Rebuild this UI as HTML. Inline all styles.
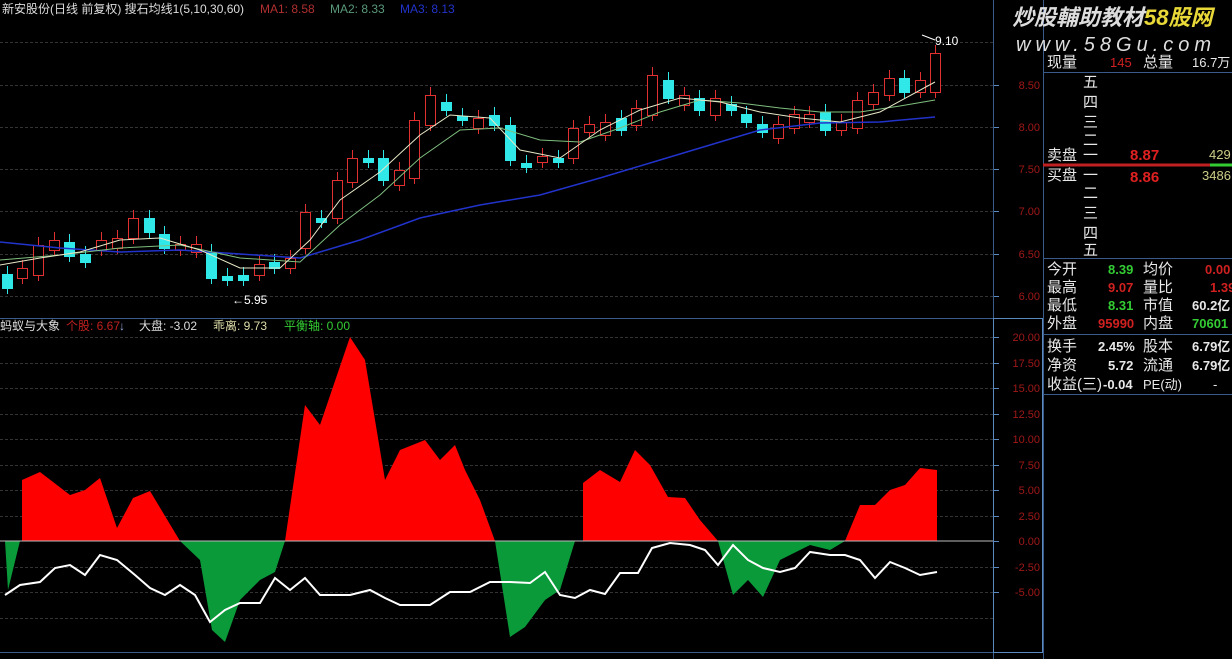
<!DOCTYPE html>
<html><head><meta charset="utf-8"><style>
html,body{margin:0;padding:0;background:#000;width:1232px;height:659px;overflow:hidden}
svg{position:absolute;left:0;top:0}
text{font-family:"Liberation Sans","Noto Sans CJK SC",sans-serif}
</style></head><body>
<svg id="s" width="1232" height="659" xmlns="http://www.w3.org/2000/svg">
<rect width="1232" height="659" fill="#000"/>
<g id="grid"></g>
<!-- lower panel areas -->
<polygon fill="#ff0000" points="22,541 22,480 40,472 70,495 85,490 100,478 117,528 133,498 150,491 180,541"/>
<polygon fill="#0a9a3a" points="5,541 8,590 20,541"/>
<polygon fill="#0a9a3a" points="180,541 200,560 212,630 225,642 240,600 260,580 275,572 285,541"/>
<polygon fill="#ff0000" points="285,541 305,405 320,425 350,337 365,360 385,480 400,450 425,440 440,460 455,445 465,470 480,500 495,541"/>
<polygon fill="#0a9a3a" points="495,541 510,637 525,627 545,600 560,590 575,541"/>
<polygon fill="#ff0000" points="583,541 583,483 600,470 620,482 635,450 650,465 668,497 685,498 700,520 718,541"/>
<polygon fill="#0a9a3a" points="718,541 733,595 748,580 763,597 780,560 810,545 830,550 845,541"/>
<polygon fill="#ff0000" points="845,541 860,505 875,505 890,490 905,485 920,468 937,470 937,541"/>
<line x1="0" y1="541" x2="993" y2="541" stroke="#bbb" stroke-width="1"/>
<polyline fill="none" stroke="#fff" stroke-width="2" points="5,595 20,585 40,582 55,568 70,565 85,575 100,555 117,560 135,575 150,588 165,595 180,585 195,595 210,622 225,610 240,603 260,603 275,578 290,590 305,578 320,595 350,595 370,590 385,598 400,605 430,605 450,592 470,592 490,582 510,582 530,583 545,572 560,595 575,598 590,590 605,594 620,573 638,573 652,548 670,543 690,545 705,550 718,565 733,545 748,560 763,568 780,572 795,568 810,552 830,555 845,555 860,560 875,578 890,562 905,568 920,575 937,572"/>
<g id="candles"></g>
<!-- MAs -->
<polyline fill="none" stroke="#2233cc" stroke-width="1.5" points="0,242 60,248 120,252 180,250 240,254 300,258 360,240 420,218 480,205 540,195 600,178 660,160 700,148 760,130 820,123 880,122 935,117"/>
<polyline fill="none" stroke="#7fbf7f" stroke-width="1" points="0,260 60,255 120,248 180,245 240,258 300,262 340,225 380,195 420,158 460,130 500,128 540,140 580,142 620,128 660,112 700,100 740,103 780,108 820,112 860,112 900,106 935,100"/>
<polyline fill="none" stroke="#e8e8c8" stroke-width="1" points="0,265 40,258 80,252 120,240 160,238 200,250 240,268 280,268 310,240 340,200 380,172 420,135 450,115 490,118 520,150 560,158 600,130 640,110 680,98 720,102 760,112 800,118 840,122 880,112 935,82"/>
<!-- axes -->
<line x1="993.5" y1="0" x2="993.5" y2="659" stroke="#3a5a8a"/>
<line x1="0" y1="318.5" x2="993" y2="318.5" stroke="#3a5a8a"/>
<rect x="993.5" y="318.5" width="49" height="334" fill="none" stroke="#5a8ac0"/>
<line x1="1043.5" y1="0" x2="1043.5" y2="659" stroke="#3a5a8a"/>
<line x1="0" y1="652.5" x2="993" y2="652.5" stroke="#3a5a8a"/>
<g id="axis" font-size="11" fill="#a01818"></g>
<!-- labels -->
<text x="935" y="45" font-size="12" fill="#fff">9.10</text>
<line x1="922" y1="35" x2="935" y2="40" stroke="#fff"/>
<text x="232" y="304" font-size="12" fill="#fff">←5.95</text>
<text x="2" y="13" font-size="12" fill="#ddd">新安股份(日线 前复权) 搜石均线1(5,10,30,60)</text>
<text x="260" y="13" font-size="12" fill="#b03030">MA1: 8.58</text>
<text x="330" y="13" font-size="12" fill="#5a9a7a">MA2: 8.33</text>
<text x="400" y="13" font-size="12" fill="#2233cc">MA3: 8.13</text>
<text x="0" y="330" font-size="12" fill="#ddd">蚂蚁与大象</text>
<text x="66" y="330" font-size="12" fill="#c02020">个股: 6.67</text>
<text x="119" y="330" font-size="12" fill="#9ad">↓</text>
<text x="139" y="330" font-size="12" fill="#ddd">大盘: -3.02</text>
<text x="213" y="330" font-size="12" fill="#dda">乖离: 9.73</text>
<text x="284" y="330" font-size="12" fill="#3c3">平衡轴: 0.00</text>
<!-- right panel -->
<text x="1012" y="25" font-size="22" font-style="italic" font-weight="bold" fill="#ddd">炒股輔助教材<tspan fill="#e8d838">58股网</tspan></text>
<text x="1016" y="51" font-size="20" font-style="italic" fill="#ddd" letter-spacing="5">www.58Gu.com</text>
<g font-size="15" fill="#e8e8e8">
<text x="1047" y="67">现量</text><text x="1110" y="67" fill="#d02020" font-size="13">145</text><text x="1143" y="67">总量</text><text x="1192" y="67" font-size="13">16.7万</text>
<line x1="1043" y1="72.5" x2="1232" y2="72.5" stroke="#3a5a8a"/>
<text x="1083" y="87">五</text><text x="1083" y="107">四</text><text x="1083" y="127">三</text><text x="1083" y="145">二</text><text x="1083" y="160">一</text>
<text x="1047" y="160">卖盘</text><text x="1130" y="160" fill="#e02020" font-weight="bold">8.87</text><text x="1209" y="159" fill="#cc8" font-size="13">429</text>
<text x="1047" y="180">买盘</text><text x="1083" y="180">一</text><text x="1130" y="182" fill="#e02020" font-weight="bold">8.86</text><text x="1202" y="180" fill="#cc8" font-size="13">3486</text>
<text x="1083" y="198">二</text><text x="1083" y="218">三</text><text x="1083" y="238">四</text><text x="1083" y="255">五</text>
<line x1="1043" y1="258.5" x2="1232" y2="258.5" stroke="#3a5a8a"/>
<text x="1047" y="274">今开</text><text x="1108" y="274" fill="#3c3" font-weight="bold" font-size="13">8.39</text><text x="1143" y="274">均价</text><text x="1205" y="274" fill="#d02020" font-weight="bold" font-size="13">0.00</text>
<text x="1047" y="292">最高</text><text x="1108" y="292" fill="#d02020" font-weight="bold" font-size="13">9.07</text><text x="1143" y="292">量比</text><text x="1210" y="292" fill="#d02020" font-weight="bold" font-size="13">1.39</text>
<text x="1047" y="310">最低</text><text x="1108" y="310" fill="#3c3" font-weight="bold" font-size="13">8.31</text><text x="1143" y="310">市值</text><text x="1192" y="310" font-size="13" font-weight="bold">60.2亿</text>
<text x="1047" y="328">外盘</text><text x="1098" y="328" fill="#d02020" font-weight="bold" font-size="13">95990</text><text x="1143" y="328">内盘</text><text x="1192" y="328" fill="#3c3" font-weight="bold" font-size="13">70601</text>
<line x1="1043" y1="334.5" x2="1232" y2="334.5" stroke="#3a5a8a"/>
<text x="1047" y="351">换手</text><text x="1098" y="351" font-weight="bold" font-size="13">2.45%</text><text x="1143" y="351">股本</text><text x="1192" y="351" font-weight="bold" font-size="13">6.79亿</text>
<text x="1047" y="370">净资</text><text x="1108" y="370" font-weight="bold" font-size="13">5.72</text><text x="1143" y="370">流通</text><text x="1192" y="370" font-weight="bold" font-size="13">6.79亿</text>
<text x="1047" y="389">收益(三)</text><text x="1103" y="389" font-weight="bold" font-size="13">-0.04</text><text x="1143" y="389" font-size="13">PE(动)</text><text x="1213" y="389" font-size="13">-</text>
<line x1="1043" y1="394.5" x2="1232" y2="394.5" stroke="#3a5a8a"/>
</g>
<line x1="1043" y1="165" x2="1210" y2="165" stroke="#c02020" stroke-width="3"/>
<line x1="1210" y1="165" x2="1232" y2="165" stroke="#3c3" stroke-width="3"/>
</svg>
<script>
var NS="http://www.w3.org/2000/svg";
function el(p,t,a){var e=document.createElementNS(NS,t);for(var k in a)e.setAttribute(k,a[k]);p.appendChild(e);return e;}
var g=document.getElementById('grid');
[42,85,127,169,211,254,296,337,363,388,414,439,465,490,516,567,592,618].forEach(function(y){el(g,'line',{x1:0,y1:y+.5,x2:993,y2:y+.5,stroke:'#333','stroke-dasharray':'3,2'});});
var ax=document.getElementById('axis');
[["8.50",85],["8.00",127],["7.50",169],["7.00",211],["6.50",254],["6.00",296],["20.00",337],["17.50",363],["15.00",388],["12.50",414],["10.00",439],["7.50",465],["5.00",490],["2.50",516],["0.00",541],["-2.50",567],["-5.00",592]].forEach(function(a){var t=el(ax,'text',{x:1040,y:a[1]+4,'text-anchor':'end'});t.textContent=a[0];el(ax,'line',{x1:994,y1:a[1]+.5,x2:999,y2:a[1]+.5,stroke:'#5a8ac0'});});
var c=[[7,274,288,0],[22,268,278,1],[38,245,275,1],[54,240,250,1],[69,242,256,0],[85,254,262,0],[101,240,250,1],[117,238,248,1],[133,218,238,1],[149,218,232,0],[164,234,248,0],[180,244,250,1],[196,244,252,1],[211,252,278,0],[227,276,280,0],[243,275,280,0],[259,264,275,1],[274,262,268,0],[290,258,268,1],[305,212,248,1],[321,218,222,0],[337,180,218,1],[352,158,182,1],[368,158,162,0],[383,158,180,0],[399,170,185,1],[414,120,178,1],[430,95,125,1],[446,102,110,0],[462,116,120,0],[478,118,128,1],[494,115,125,0],[510,125,160,0],[526,163,167,0],[542,156,162,1],[558,158,162,0],[573,128,158,1],[589,124,132,1],[605,122,135,1],[621,118,130,0],[636,108,125,1],[652,75,115,1],[668,80,98,0],[684,95,105,1],[699,98,110,0],[715,98,115,1],[731,104,110,0],[746,114,122,0],[762,124,132,0],[778,124,138,1],[794,114,128,1],[809,114,122,1],[825,112,130,0],[841,122,130,1],[857,100,128,1],[873,92,104,1],[889,78,95,1],[904,78,92,0],[920,80,92,1],[935,53,92,1]];
var cg=document.getElementById('candles');
c.forEach(function(a){var col=a[3]?'#e03030':'#30e8e8';el(cg,'line',{x1:a[0]+.5,y1:a[1]-8,x2:a[0]+.5,y2:a[2]+6,stroke:col});
if(a[3])el(cg,'rect',{x:a[0]-4.5,y:a[1]+.5,width:10,height:a[2]-a[1],fill:'#000',stroke:col});
else el(cg,'rect',{x:a[0]-5,y:a[1],width:11,height:a[2]-a[1]+1,fill:col});});
</script>
</body></html>
